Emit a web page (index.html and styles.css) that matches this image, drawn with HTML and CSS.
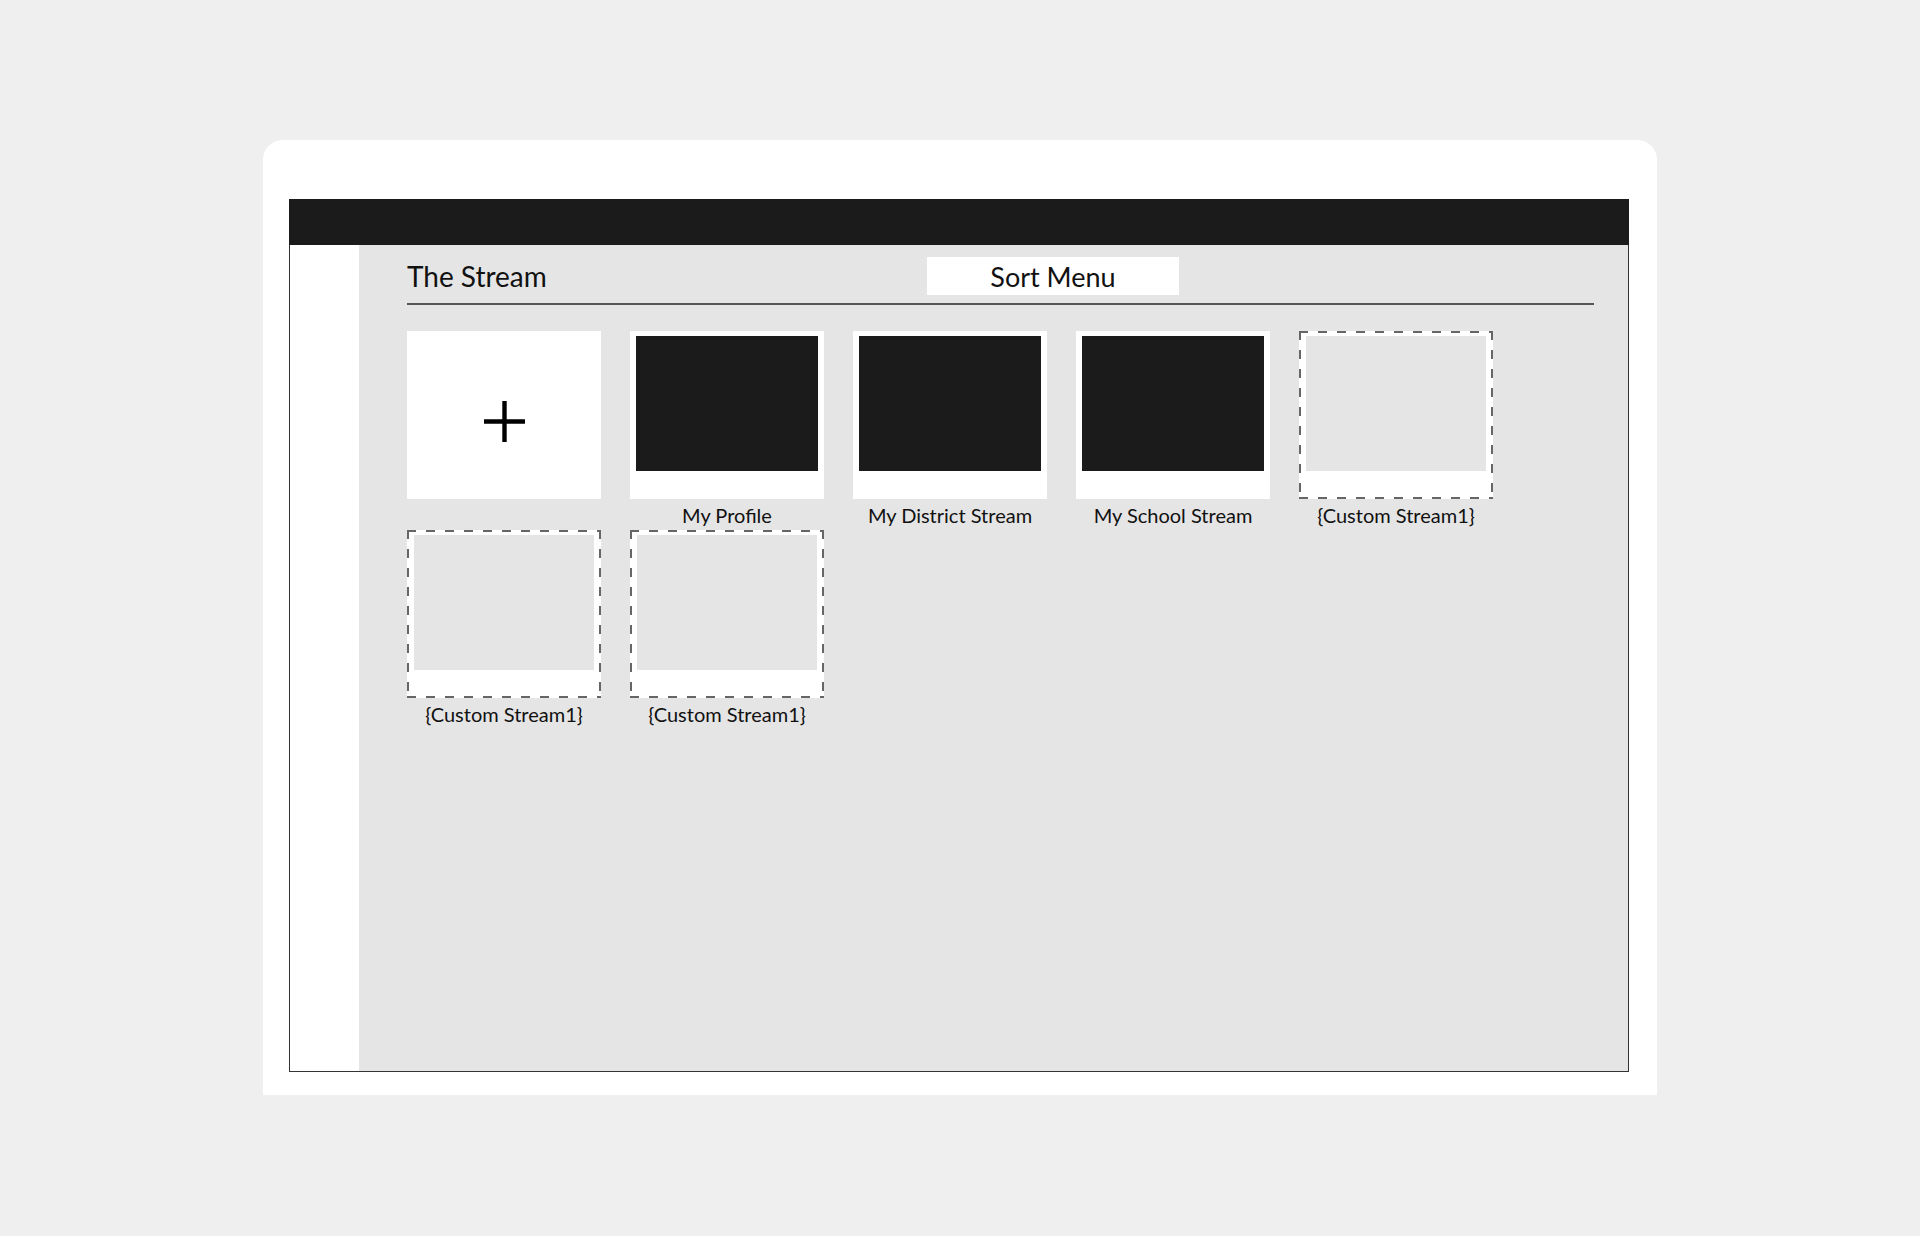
FILE: index.html
```html
<!doctype html>
<html lang="en">
<head>
    <meta charset="UTF-8">
    <title>The Stream</title>
<link rel="stylesheet" href="styles.css">
</head>
<body>
<div class="card">
<div class="frame">
<div class="topbar"></div>
<div class="body">
<div class="sidebar"></div>
<div class="main">
<div class="header">
<h1 class="title">The Stream</h1>
<div class="sort">Sort Menu</div>
</div>

<div class="streams">
<div class="stream">
<div class="tile add">
<svg width="41" height="41" viewBox="0 0 41 41"><path d="M20.5 0V41M0 20.5H41" stroke="#000" stroke-width="4.4" fill="none"/></svg>
</div>
<div class="label"></div>
</div>
<div class="stream">
<div class="tile"><div class="thumb dark"></div></div>
<div class="label">My Profile</div>
</div>
<div class="stream">
<div class="tile"><div class="thumb dark"></div></div>
<div class="label">My District Stream</div>
</div>
<div class="stream">
<div class="tile"><div class="thumb dark"></div></div>
<div class="label">My School Stream</div>
</div>
<div class="stream">
<div class="tile dashed"><div class="thumb"></div></div>
<div class="label">{Custom Stream1}</div>
</div>
<div class="stream">
<div class="tile dashed"><div class="thumb"></div></div>
<div class="label">{Custom Stream1}</div>
</div>
<div class="stream">
<div class="tile dashed"><div class="thumb"></div></div>
<div class="label">{Custom Stream1}</div>
</div>
</div>
</div>
</div>
</div>
</div>
</body>
</html>
```

FILE: styles.css
```css
body {
    margin: 0;
    background-color: #efefef;
    font-family: Lato, "Open Sans", sans-serif;
    color: #111;
}
.card {
    box-sizing: border-box;
    width: 1394px;
    height: 955px;
    margin: 140px auto 0;
    padding: 59px 28px 23px 26px;
    background-color: #fff;
    border-radius: 20px 20px 0 0;
}
.frame {
    box-sizing: border-box;
    height: 873px;
    border: 1px solid #333;
    display: flex;
    flex-direction: column;
}
.topbar {
    height: 46px;
    background-color: #1b1b1b;
    margin: -1px -1px 0;
}
.body {
    flex: 1;
    display: flex;
}
.sidebar {
    width: 69px;
    background-color: #fff;
}
.main {
    flex: 1;
    background-color: #e5e5e5;
    padding: 12px 34px 0 48px;
}
.header {
    display: grid;
    grid-template-columns: 520px 252px;
    align-items: center;
    height: 38px;
    padding-bottom: 8px;
    border-bottom: 2px solid #555;
}
.title {
    margin: 0;
    font-size: 28px;
    font-weight: normal;
    color: #111;
}
.sort {
    height: 38px;
    line-height: 39px;
    background-color: #fff;
    text-align: center;
    font-size: 27px;
}
.streams {
    display: grid;
    grid-template-columns: repeat(5, 194px);
    column-gap: 29px;
    margin-top: 26px;
}
.tile {
    box-sizing: border-box;
    height: 168px;
    padding: 5px 6px 28px;
    background-color: #fff;
}
.tile.add {
    display: flex;
    align-items: center;
    justify-content: center;
    padding: 12px 0 0;
}
.tile.dashed {
    background:
        repeating-linear-gradient(90deg, #666 0 9px, transparent 9px 19px) top left / 100% 2px no-repeat,
        repeating-linear-gradient(90deg, #666 0 9px, transparent 9px 19px) bottom left / 100% 2px no-repeat,
        repeating-linear-gradient(180deg, #666 0 9px, transparent 9px 19px) top left / 2px 100% no-repeat,
        repeating-linear-gradient(180deg, #666 0 9px, transparent 9px 19px) top right / 2px 100% no-repeat,
        #fff;
    padding: 5px 7px 28px;
}
.thumb {
    height: 100%;
    background-color: #e5e5e5;
}
.thumb.dark {
    background-color: #1b1b1b;
}
.label {
    height: 31px;
    line-height: 32px;
    text-align: center;
    font-size: 20px;
}
```
